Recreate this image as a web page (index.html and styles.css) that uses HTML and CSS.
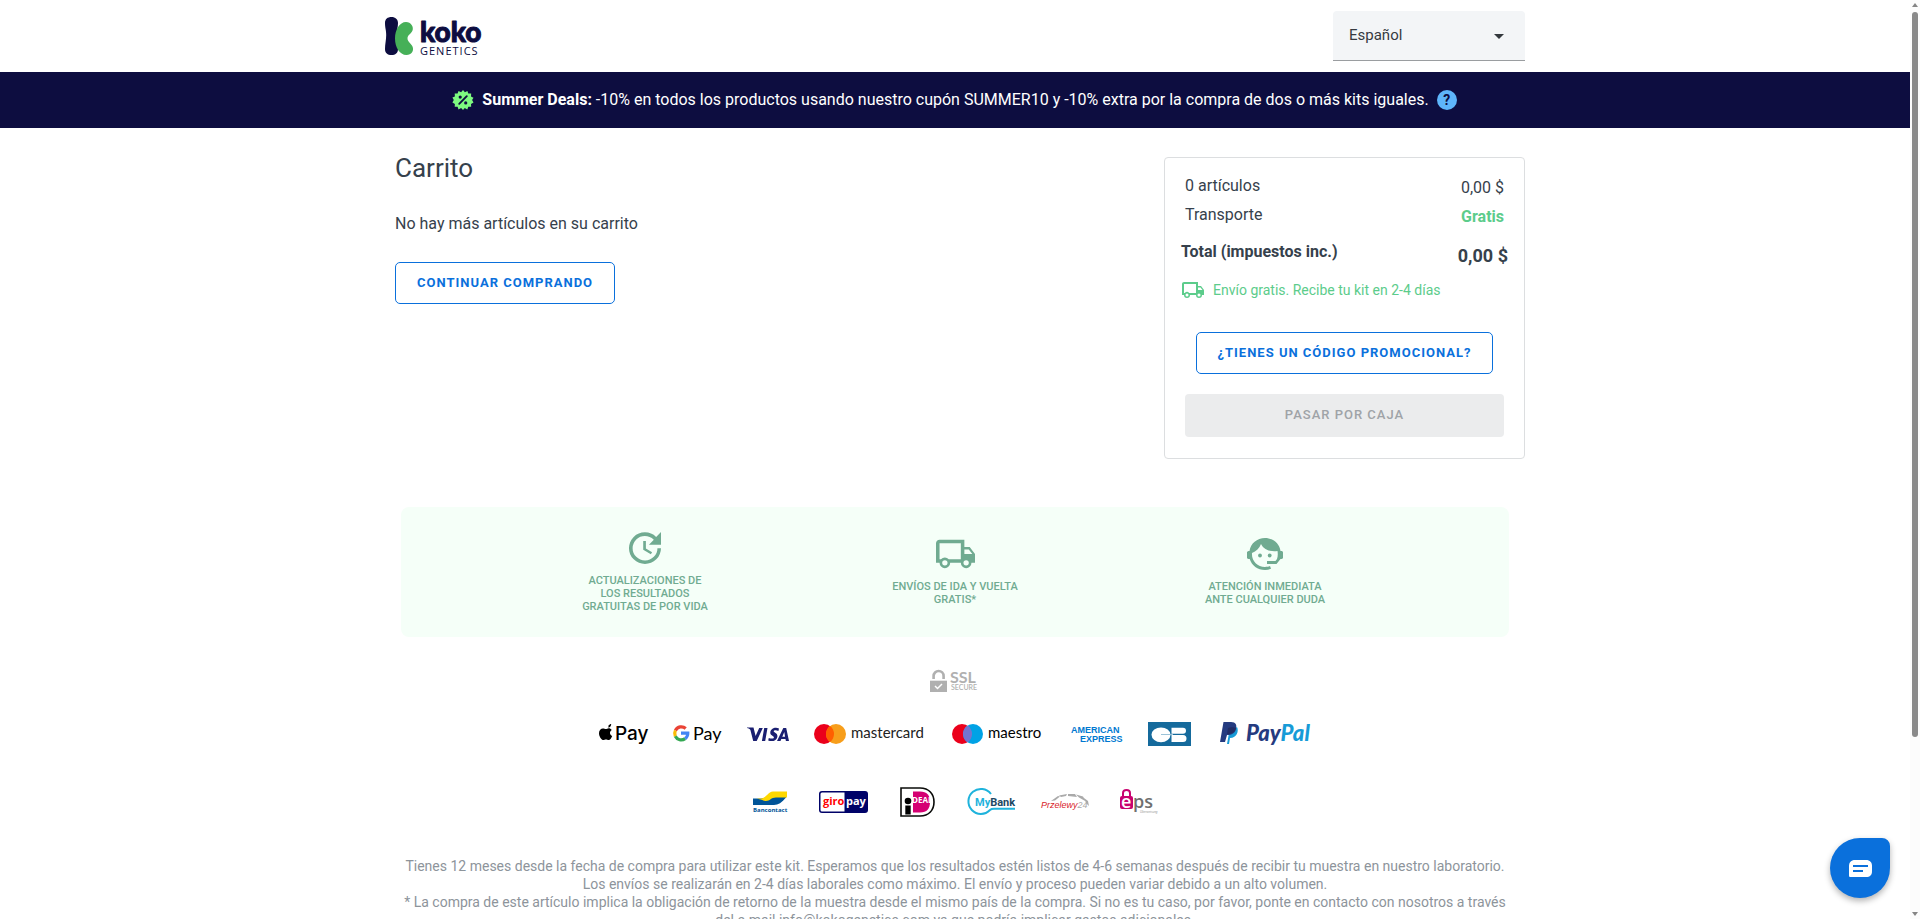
FILE: index.html
```html
<!DOCTYPE html>
<html lang="es">
<head>
<meta charset="utf-8">
<title>Carrito - Koko Genetics</title>
<meta name="viewport" content="width=device-width, initial-scale=1">
<link rel="stylesheet" href="styles.css">
</head>
<body>
<div class="viewport">
<div class="page">
  <header class="header">
    <div class="container header-inner">
      <a class="brand" href="#" aria-label="Koko Genetics">
        <svg width="100" height="40" viewBox="0 0 100 40">
          <path fill="#0d0d40" d="M0 7C0 3 2.600 1 6.500 1S13 3.500 13 7c0 4-1.300 8-1.300 12S13 28 13 33c0 4-2.700 6-6.500 6S0 37 0 33c0-5 1.200-9 1.200-14S0 12 0 7z"/>
          <path fill="#46b058" d="M21 6c5 0 8 5 6.500 8.500C26 18 22.500 19 22.500 22.500s4 5 5.200 8.500c1.300 4-1.200 8-6.200 8C14.500 39 10 31 10 22.500S14.500 6 21 6z"/>
          <text class="logo-koko" x="35" y="26">koko</text>
          <text class="logo-genetics" x="35" y="39">GENETICS</text>
        </svg>
      </a>
      <div class="language">
        <select class="language-select" aria-label="Idioma">
          <option>Español</option>
        </select>
        <svg class="language-arrow" width="10" height="5" viewBox="0 0 10 5"><path d="M0 0h10L5 5z" fill="#33383d"/></svg>
      </div>
    </div>
  </header>

  <div class="deals">
    <svg class="deals-badge" width="20" height="20" viewBox="0 0 20 20">
      <path fill="#7dfa80" d="M10 0l1.900 2.200L14.400.9l.9 2.700 2.900-.1-.2 2.900 2.500 1.300-1.400 2.400 1.400 2.500-2.500 1.300.2 2.900-2.900-.1-1 2.700-2.500-1.300L10 20l-1.900-1.900-2.600 1.300-.9-2.700-2.900.1.200-2.900-2.500-1.300L.8 10-.6 7.600l2.500-1.200-.2-2.900 2.900.1.900-2.700 2.600 1.300z"/>
      <path d="M6.200 13.800l7.600-7.600" stroke="#0d0d40" stroke-width="1.900" stroke-linecap="round"/>
      <circle cx="7.200" cy="7.100" r="1.600" fill="#0d0d40"/><circle cx="12.700" cy="12.900" r="1.600" fill="#0d0d40"/>
    </svg>
    <p class="deals-text"><strong>Summer Deals:</strong> -10% en todos los productos usando nuestro cupón SUMMER10 y -10% extra por la compra de dos o más kits iguales.</p>
    <button class="help" aria-label="Ayuda">?</button>
  </div>

  <main class="container">
    <div class="cart">
      <section class="cart-main">
        <h1 class="title">Carrito</h1>
        <p class="empty">No hay más artículos en su carrito</p>
        <a class="button" href="#">Continuar comprando</a>
      </section>
      <aside class="summary">
        <div class="row"><span>0 artículos</span><span class="value">0,00 $</span></div>
        <div class="row"><span>Transporte</span><span class="value free">Gratis</span></div>
        <div class="row total"><span>Total (impuestos inc.)</span><span class="value">0,00 $</span></div>
        <div class="shipping">
          <svg width="22" height="16" viewBox="1 4 22 16"><path fill="currentColor" fill-rule="evenodd" d="M3 4h14v4h3l3 4v5h-2a3 3 0 0 1-6 0H9a3 3 0 0 1-6 0H1V6c0-1.100.9-2 2-2zm0 2v9h.8a3 3 0 0 1 4.400 0H15V6zm14 3.500V12h4.500l-2-2.500zM6 15.500a1.500 1.500 0 1 0 0 3 1.500 1.500 0 0 0 0-3zm12 0a1.500 1.500 0 1 0 0 3 1.500 1.500 0 0 0 0-3z"/></svg>
          <span>Envío gratis. Recibe tu kit en 2-4 días</span>
        </div>
        <button class="button promo">¿Tienes un código promocional?</button>
        <button class="checkout" disabled>Pasar por caja</button>
      </aside>
    </div>

    <section class="benefits">
      <div class="benefit">
        <svg width="32" height="32" viewBox="3 3 18 18"><path fill="currentColor" d="M21 10.120h-6.780l2.740-2.820c-2.730-2.700-7.150-2.800-9.880-.1a6.875 6.875 0 0 0 0 9.790 7.020 7.020 0 0 0 9.880 0C18.320 15.650 19 14.080 19 12.100h2c0 1.980-.88 4.550-2.640 6.290-3.510 3.480-9.210 3.480-12.720 0-3.500-3.470-3.530-9.110-.02-12.580a8.987 8.987 0 0 1 12.650 0L21 3zM12.500 8v4.250l3.500 2.080-.72 1.210L11 13V8z"/></svg>
        <p>Actualizaciones de<br>los resultados<br>gratuitas de por vida</p>
      </div>
      <div class="benefit">
        <svg width="39" height="32" viewBox="1 3 22 18"><path fill="currentColor" fill-rule="evenodd" d="M3 4h14v4h3l3 4v5h-2a3 3 0 0 1-6 0H9a3 3 0 0 1-6 0H1V6c0-1.100.9-2 2-2zm0 2v9h.8a3 3 0 0 1 4.400 0H15V6zm14 3.500V12h4.500l-2-2.500zM6 15.500a1.500 1.500 0 1 0 0 3 1.500 1.500 0 0 0 0-3zm12 0a1.500 1.500 0 1 0 0 3 1.500 1.500 0 0 0 0-3z"/></svg>
        <p>Envíos de ida y vuelta<br>gratis*</p>
      </div>
      <div class="benefit">
        <svg width="36" height="32" viewBox="0 0 36 32">
          <path fill="currentColor" d="M2.500 13C3.500 5.500 10 0 18 0s14.500 5.500 15.500 13c1.500 0 2.500.4 2.500 1.500v5c0 1.100-1 1.500-2.500 1.500L29.500 26H20v-3h8.500l1.500-2c.8-2.300 1-5 .5-8C23.500 14 17 12 14 6c-1.600 4.200-4.800 7.500-9 9-.7 7.500 5.200 14 13 14 2 0 3.500-.3 5-.9l1 2.700c-2 .8-4 1.200-6 1.200-7.500 0-13.300-4.500-15.300-11C1 21 0 20.500 0 19.500v-5C0 13.500 1 13 2.500 13z"/>
          <circle cx="13" cy="17.500" r="1.900" fill="currentColor"/><circle cx="22.700" cy="17.500" r="1.900" fill="currentColor"/>
        </svg>
        <p>Atención inmediata<br>ante cualquier duda</p>
      </div>
    </section>

    <div class="secure">
      <svg width="50" height="24" viewBox="0 0 50 24" role="img" aria-label="SSL Secure">
        <path fill="none" stroke="#b0b0b0" stroke-width="2.600" d="M3.600 10V7a5 5 0 0 1 10 0v3"/>
        <path fill="#b0b0b0" d="M0 11.700h17V23H0z"/>
        <path fill="none" stroke="#fff" stroke-width="1.500" d="M5 17l2.500 2.500 4.500-4.500"/>
        <text class="ssl-text" x="20" y="14">SSL</text>
        <text class="ssl-sub" x="21" y="21">SECURE</text>
      </svg>
    </div>

    <div class="payments">
      <svg width="50" height="30" viewBox="0 0 50 30">
        <path d="M9.500 7.400c.2-1.400-.5 0 .5-1.300.6-.7 1.500-1.200 2.200-1.200.1 1-.3 1.800-.8 2.500s-1.400 1.200-2.200 1.100zM6.800 10.100c.9 0 1.700-.8 3-.8 1 0 2.200.6 2.900 1.600-2.500 1.500-2.100 5 .5 6-.6 1.600-2 4.200-3.600 4.200-1 0-1.400-.6-2.600-.6-1.300 0-1.700.6-2.600.6C2.500 21.100 0 17.400 0 14.200c0-3.100 2-4.800 3.900-4.800 1.200 0 2.100.7 2.900.7z"/>
        <text class="apple-text" x="16" y="21">Pay</text>
      </svg>
      <svg width="50" height="30" viewBox="0 0 50 30">
        <g fill="none" stroke-width="3.200"><path stroke="#ea4335" d="M2.400 11.400a6.600 6.600 0 0 1 10.300-1.900"/><path stroke="#fbbc04" d="M2.300 17.300a6.600 6.600 0 0 1 .1-5.900"/><path stroke="#34a853" d="M2.300 17.300a6.600 6.600 0 0 0 9.800 2.300"/><path stroke="#4285f4" d="M8 14.100h6.800a6.600 6.600 0 0 1-2.700 5.500"/></g>
        <text class="gpay-text" x="20" y="21">Pay</text>
      </svg>
      <svg width="42" height="30" viewBox="0 -3 42 30">
        <path fill="#1a1f71" d="M0 5.500h6.500L8.600 14l3.600-8h3.600L9.700 19H6.200L3.400 8C2.800 6.800 1.500 6.300 0 6zM17.200 6h3.300l-2.300 13h-3.300zM32 6.400l-.6 2.500c-2-1-4.600-.9-4.700.3-.1 1.300 4 1.600 3.700 5.200-.4 4-4.700 5.600-9.200 4.200l.6-2.700c2.100 1 4.900 1 5.100-.5.200-1.600-3.900-1.700-3.600-5 .3-3.700 4.600-5.700 8.700-4zM36.300 6h2.900L42 19h-3.100l-.4-1.900h-4.200l-.8 1.900H30zm1 4l-2 4.700H38z"/>
      </svg>
      <svg width="114" height="30" viewBox="0 0 114 30">
        <circle cx="11" cy="15" r="10" fill="#eb001b"/><circle cx="23" cy="15" r="10" fill="#f79e1b"/><path fill="#ff5f00" d="M17 7a10 10 0 0 1 0 16 10 10 0 0 1 0-16z"/>
        <text class="mc-text" x="38" y="19">mastercard</text>
      </svg>
      <svg width="94" height="30" viewBox="0 0 94 30">
        <circle cx="11" cy="15" r="10" fill="#eb001b"/><circle cx="22" cy="15" r="10" fill="#00a2e5"/><path fill="#7375cf" d="M16.500 6.600a10 10 0 0 1 0 16.800 10 10 0 0 1 0-16.800z"/>
        <text class="mc-text maestro" x="37" y="19">maestro</text>
      </svg>
      <svg width="54" height="30" viewBox="0 0 54 30">
        <text class="amex" x="2" y="14">AMERICAN</text><text class="amex" x="11" y="23">EXPRESS</text>
      </svg>
      <svg width="48" height="30" viewBox="0 0 48 30">
        <path fill="#156a9c" d="M1 3h43v24H1z"/>
        <path fill="#fff" d="M24.500 8.700H36a3 3 0 0 1 0 6H24.500zM24.500 16H36a3.500 3.500 0 0 1 0 7H24.500z"/>
        <ellipse cx="14" cy="15.800" rx="9.500" ry="7.400" fill="#fff"/><path stroke="#9cc3d8" d="M14 15.500h12"/>
      </svg>
      <svg width="92" height="30" viewBox="0 0 92 30">
        <path fill="#179bd7" d="M8 25l2-11 8-6c2 4 0 11-7 11l-1 6z"/>
        <path fill="#253b80" d="M4.500 3H12c5 0 6 3 5 7-1 4-4 6-9 6l-2 7H1z"/>
        <path fill="#222d65" d="M9 9c2-1 6-1 8 0-1 4-4 6-9 6z"/>
        <text class="paypal" x="27" y="22" fill="#253b80">Pay<tspan fill="#179bd7">Pal</tspan></text>
      </svg>
    </div>

    <div class="payments banks">
      <svg width="44" height="32" viewBox="0 0 44 32">
        <path fill="#005498" d="M6 12.500h8c4 0 6-2 8-4h17v3c-4 5-8 7.500-12 7.500H6z"/>
        <path fill="#ffd800" d="M10 12.500h4c5 0 7-7 12-7h14v6H29c-5 0-6 3.500-10 3.500-2 0-3-1-9-2.500z"/>
        <text class="bancontact" x="6" y="26">Bancontact</text>
      </svg>
      <svg width="55" height="32" viewBox="0 0 55 32">
        <rect x="2" y="5" width="49" height="22" rx="3" fill="#000268"/><path fill="#fff" d="M5 6.500h22.500v19H5a1.500 1.500 0 0 1-1.500-1.500V8A1.500 1.500 0 0 1 5 6.500z"/>
        <text class="giro" x="6" y="19" fill="#f00">giro</text><text class="giro" x="29" y="19" fill="#fff">pay</text>
      </svg>
      <svg width="42" height="32" viewBox="0 0 42 32">
        <path fill="#fff" stroke="#0a0b09" stroke-width="1.600" d="M3 2h19c9 0 14 6 14 14s-5 14-14 14H3z"/>
        <path fill="#d50072" d="M15 5.500h7c7 0 10 4 10 10.500S29 26.500 22 26.500h-7z"/>
        <circle cx="10" cy="15" r="3.300"/><path d="M7.300 19.500h5.400v9H7.300z"/>
        <text class="ideal" x="14" y="17">DEAL</text>
      </svg>
      <svg width="49" height="32" viewBox="0 0 49 32">
        <path fill="none" stroke="#1fb3dc" stroke-width="2" d="M25 8A12.500 12.500 0 1 0 24 24c1-.9 2-1.200 4-1.200h21"/>
        <text class="mybank" x="9" y="20" fill="#1fb3dc">My<tspan fill="#1c4863">Bank</tspan></text>
      </svg>
      <svg width="50" height="32" viewBox="0 0 50 32">
        <g fill="#aaa"><path d="M10 15l7-5 2 .5-5 4zM18 9.500L26 8l-1 2-5 1zM27 8h7l2 3-9-1zM35 8.500l7 2 3 5-7-4zM43 12l4 3 1 5-3-3z"/></g>
        <text class="prz" x="0" y="22" fill="#d8232a">Przelewy<tspan class="prz-num">24</tspan></text>
      </svg>
      <svg width="46" height="32" viewBox="0 0 46 32">
        <path fill="none" stroke="#c8036f" stroke-width="2" d="M6 11V7c0-4 7-4 7 0v4"/><rect x="3" y="10" width="13" height="13" rx="2" fill="#c8036f"/>
        <text class="eps" x="4" y="22" fill="#fff">e</text><text class="eps" x="16" y="22" fill="#706f6f">ps</text>
        <text class="eps-sub" x="23" y="27">Überweisung</text>
      </svg>
    </div>

    <div class="legal">
      <p>Tienes 12 meses desde la fecha de compra para utilizar este kit. Esperamos que los resultados estén listos de 4-6 semanas después de recibir tu muestra en nuestro laboratorio.</p>
      <p>Los envíos se realizarán en 2-4 días laborales como máximo. El envío y proceso pueden variar debido a un alto volumen.</p>
      <p>* La compra de este artículo implica la obligación de retorno de la muestra desde el mismo país de la compra. Si no es tu caso, por favor, ponte en contacto con nosotros a través del e-mail info@kokogenetics.com ya que podría implicar gastos adicionales.</p>
    </div>
  </main>
</div>
<div class="scrollbar" aria-hidden="true">
  <svg width="6" height="4" viewBox="0 0 6 4"><path fill="#858585" d="M0 4l3-4 3 4z"/></svg>
  <div class="scrollbar-track"><div class="scrollbar-thumb"></div></div>
  <svg width="6" height="4" viewBox="0 0 6 4"><path fill="#858585" d="M0 0h6L3 4z"/></svg>
</div>
<button class="chat" aria-label="Abrir chat">
  <svg width="23" height="17" viewBox="0 0 23 17"><path fill="#fff" d="M6 0h11c4 0 6 2.500 6 6v5c0 4-2 6-6 6H1.500C.5 17 0 16.500 0 15.500V6c0-3.500 2-6 6-6z"/><path stroke="#0a70dc" stroke-width="2" d="M4 6h15M4 11h10"/></svg>
</button>
</div>
</body>
</html>
```

FILE: styles.css
```css
* { box-sizing: border-box; }

body {
  margin: 0;
  font-family: Roboto, "Liberation Sans", sans-serif;
  font-size: 16px;
  line-height: 24px;
  color: #36414c;
  background: #fff;
}

h1, p { margin: 0; }
svg { display: block; flex: none; overflow: visible; }

.viewport { display: flex; height: 100vh; overflow: hidden; }
.page { flex: 1; min-width: 0; }
.container { max-width: 1140px; margin: 0 auto; }

.header-inner { display: flex; justify-content: space-between; align-items: center; height: 72px; }
.brand { display: block; }
.logo-koko { font: 900 28px Lato, sans-serif; fill: #0d0d40; stroke: #0d0d40; stroke-width: 1px; stroke-linejoin: round; }
.logo-genetics { font: 400 11px "Open Sans", sans-serif; letter-spacing: 1px; fill: #0d0d40; }

.language { position: relative; }
.language-select {
  appearance: none;
  display: block;
  width: 192px;
  height: 50px;
  padding: 0 16px 2px;
  border: 0;
  border-bottom: 1px solid #9a9da0;
  border-radius: 4px 4px 0 0;
  background: #f3f5f7;
  color: #363a41;
  font: 15px Roboto, sans-serif;
}
.language-arrow { position: absolute; right: 21px; top: 23px; pointer-events: none; }

.deals {
  display: flex;
  align-items: center;
  justify-content: center;
  min-height: 56px;
  background: #0d0d40;
  color: #fff;
}
.deals-badge { margin-right: 9px; }
.help {
  width: 20px;
  height: 20px;
  margin-left: 8px;
  padding: 0;
  border: 0;
  border-radius: 50%;
  background: #5eb5fb;
  color: #0d0d40;
  font: 700 14px/20px Roboto, sans-serif;
}

.cart { display: flex; justify-content: space-between; align-items: flex-start; padding-top: 24px; }
.cart-main { padding-left: 10px; }
.title { font-size: 26px; font-weight: 400; line-height: 32px; }
.empty { margin: 28px 0 26px; }
.button {
  display: inline-block;
  height: 42px;
  padding: 0 21px;
  border: 1px solid #0a70dc;
  border-radius: 5px;
  background: #fff;
  color: #0a70dc;
  font: 700 13px/40px Roboto, sans-serif;
  letter-spacing: 1px;
  text-transform: uppercase;
  text-decoration: none;
}

.summary {
  display: flex;
  flex-direction: column;
  width: 361px;
  margin-top: 5px;
  padding: 16px 20px 21px;
  border: 1px solid #dcdee0;
  border-radius: 4px;
}
.row { display: flex; justify-content: space-between; margin-bottom: 3px; }
.value { padding-top: 2px; }
.free { color: #5ccc8b; font-weight: 700; }
.total { margin: 8px -4px 12px; font-weight: 700; }
.total .value { padding-top: 4px; font-size: 18px; }
.shipping {
  display: flex;
  align-items: center;
  gap: 9px;
  margin: 0 -3px;
  color: #5ccc8b;
  font-size: 14px;
  line-height: 20px;
}
.promo { align-self: center; margin: 32px 0 20px; }
.checkout {
  height: 43px;
  padding: 0 0 2px;
  border: 0;
  border-radius: 4px;
  background: #ebeced;
  color: #9fa3a7;
  font: 500 13px Roboto, sans-serif;
  letter-spacing: 1px;
  text-transform: uppercase;
}

.benefits {
  display: flex;
  justify-content: center;
  align-items: center;
  min-height: 130px;
  margin: 48px 16px 32px;
  border-radius: 8px;
  background: #f5fff8;
  color: #70ab91;
}
.benefit {
  display: flex;
  flex-direction: column;
  align-items: center;
  gap: 10px;
  width: 310px;
  text-align: center;
  font-size: 11px;
  font-weight: 500;
  line-height: 13px;
  text-transform: uppercase;
}

.secure { display: flex; justify-content: center; margin-bottom: 26px; }
.ssl-text { font: 700 16px Lato, sans-serif; fill: #b0b0b0; }
.ssl-sub { font: 600 7px Lato, sans-serif; fill: #b0b0b0; }

.payments { display: flex; flex-wrap: wrap; justify-content: center; gap: 24px; }
.banks { gap: 26px; margin: 37px 0 39px; }
.apple-text { font: 500 19px Inter, sans-serif; }
.gpay-text { font: 400 18px Lato, sans-serif; }
.mc-text { font: 400 15px Lato, sans-serif; fill: #222; }
.maestro { fill: #000; }
.amex { font: 700 9px "Liberation Sans", sans-serif; fill: #0078d0; }
.paypal { font: italic 900 22px Lato, sans-serif; }
.bancontact { font: 700 6px "Open Sans", sans-serif; fill: #005498; }
.giro { font: 700 11px "Open Sans", sans-serif; }
.ideal { font: 700 8px "Open Sans", sans-serif; fill: #fff; }
.mybank { font: 700 11px Roboto, sans-serif; }
.prz { font: italic 400 9px "Liberation Sans", sans-serif; }
.prz-num { fill: #aaa; }
.eps { font: 600 18px "Open Sans", sans-serif; }
.eps-sub { font: italic 400 3px "Liberation Sans", sans-serif; fill: #999; }

.legal {
  padding: 0 12px;
  color: #8d949b;
  font-size: 14px;
  line-height: 18px;
  text-align: center;
}

.scrollbar {
  display: flex;
  flex-direction: column;
  align-items: center;
  gap: 5px;
  flex: none;
  width: 10px;
  padding: 3px 0;
  background: #fcfcfc;
}
.scrollbar-track { flex: 1; width: 6px; }
.scrollbar-thumb { height: 81%; border-radius: 3px; background: #8a8a8a; }

.chat {
  position: fixed;
  right: 30px;
  bottom: 21px;
  display: grid;
  place-items: center;
  width: 60px;
  height: 60px;
  padding: 0;
  border: 0;
  border-radius: 50% 8px 50% 50%;
  background: #0a70dc;
  box-shadow: 0 3px 6px rgba(0, 0, 0, .3);
}
```
